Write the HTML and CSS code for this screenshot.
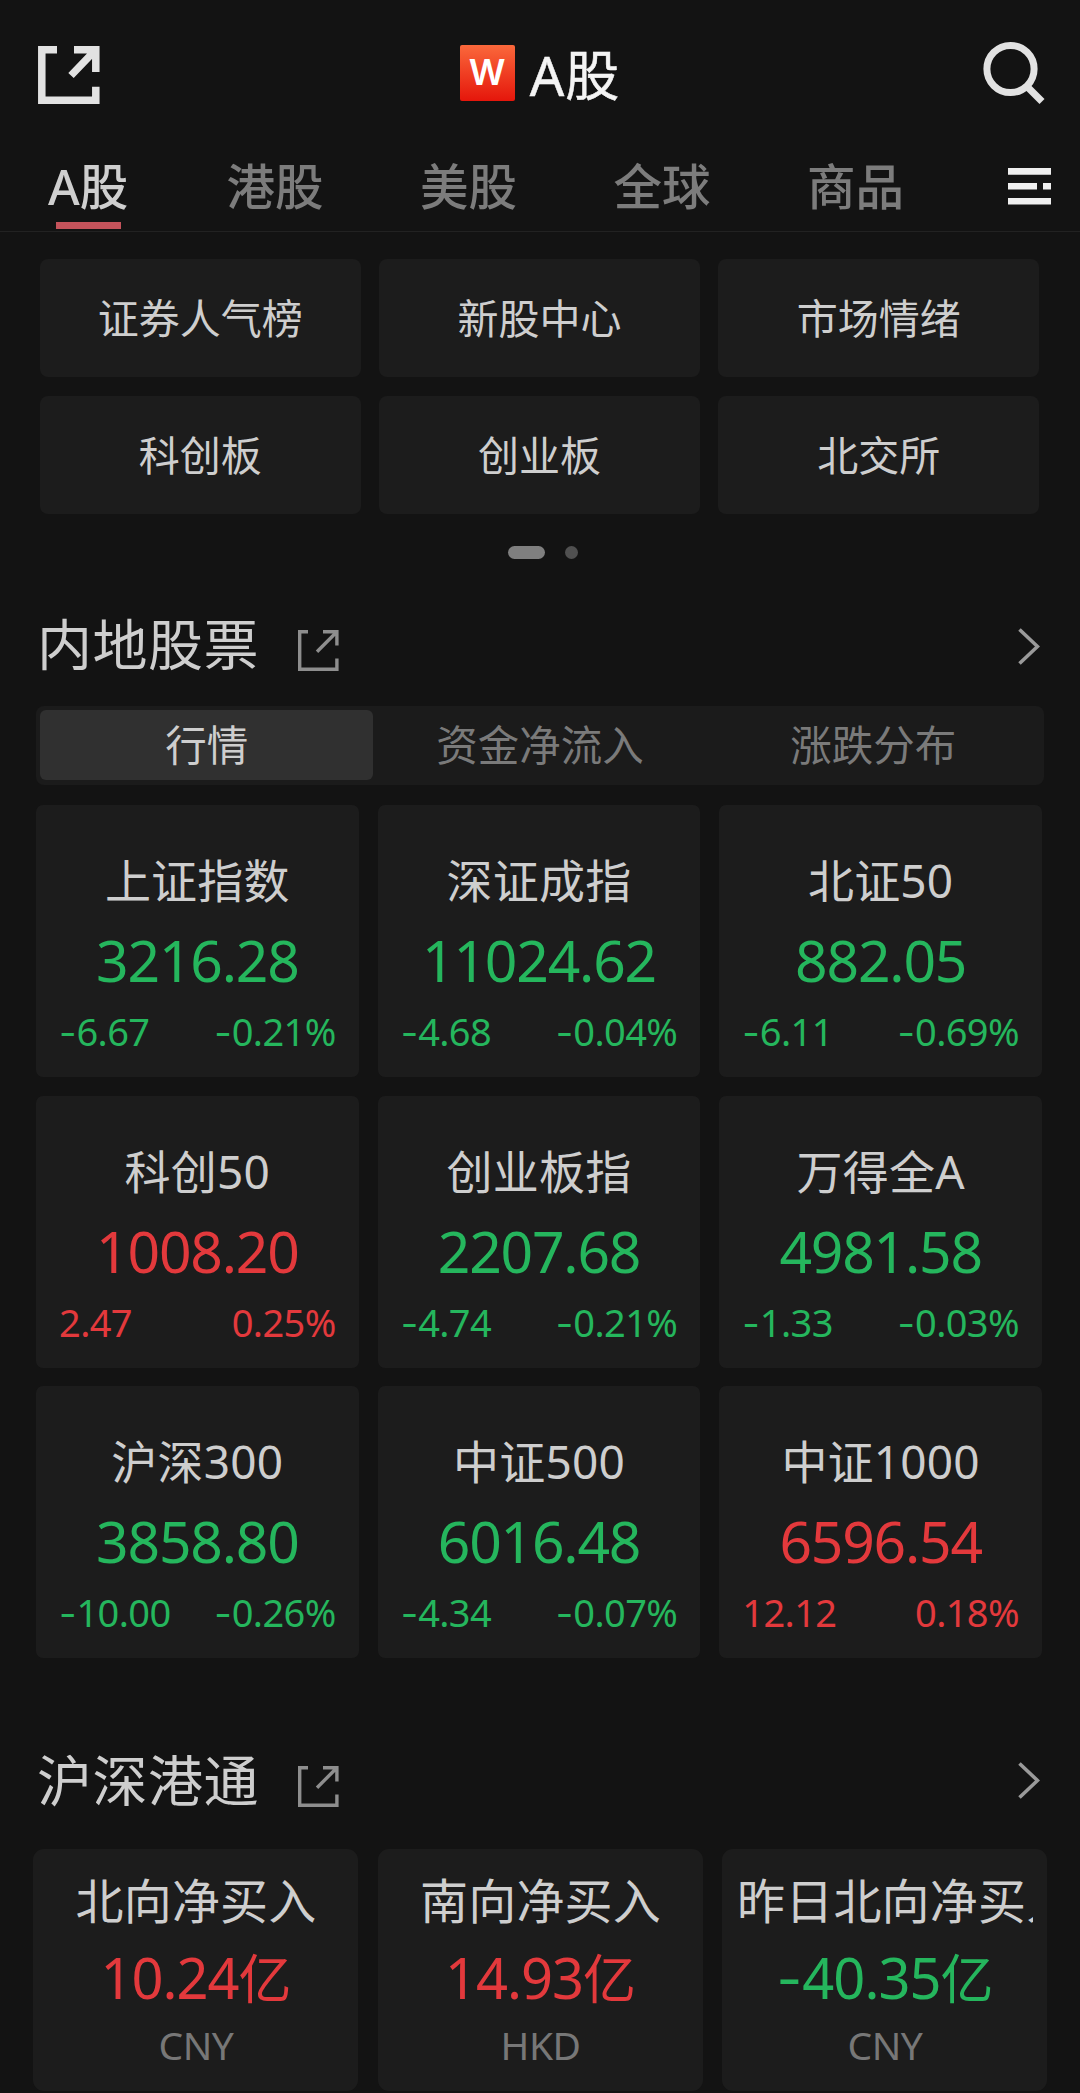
FILE: index.html
```html
<!DOCTYPE html>
<html lang="zh-CN">
<head>
<meta charset="utf-8">
<title>A股</title>
<link rel="stylesheet" href="styles.css">
</head>
<body>
<svg width="0" height="0" class="defs">
  <symbol id="share" viewBox="0 0 41 41">
    <path d="M10 1.7H1.7V39.3H38.9V28.5M25 1.7H38.9V15.5M38.4 2.2L19 21.8"/>
  </symbol>
  <symbol id="chevron" viewBox="0 0 22 37">
    <path d="M1.5 1.5L19.5 18.5L1.5 35.5"/>
  </symbol>
</svg>
<header class="header">
  <svg class="header-share" viewBox="0 0 62 58"><path d="M19 3.8H3.8V54.3H57.8V40.8M36 3.8H57.8V26M56.5 5L33 29.5"/></svg>
  <div class="brand"><span class="logo">W</span><h1 class="title">A股</h1></div>
  <svg class="search" viewBox="0 0 62 64"><circle cx="27.5" cy="28" r="23.6"/><path d="M44.5 46L59 60.5"/></svg>
</header>
<nav class="tabs">
  <span class="tab tab-active">A股</span>
  <span class="tab">港股</span>
  <span class="tab">美股</span>
  <span class="tab">全球</span>
  <span class="tab">商品</span>
  <svg class="menu" viewBox="0 0 43 37"><path d="M0 3.4H43M0 18.3H29M35 18.3H43M0 33.3H43"/></svg>
</nav>
<main>
  <div class="quick">
    <span class="quick-item">证券人气榜</span>
    <span class="quick-item">新股中心</span>
    <span class="quick-item">市场情绪</span>
    <span class="quick-item">科创板</span>
    <span class="quick-item">创业板</span>
    <span class="quick-item">北交所</span>
  </div>
  <div class="pager"><i class="pill"></i><i class="dot"></i></div>

  <section>
    <div class="section-head">
      <h2 class="section-title">内地股票</h2>
      <svg class="share"><use href="#share"/></svg>
      <svg class="chevron"><use href="#chevron"/></svg>
    </div>
    <div class="segments">
      <span class="segment segment-active">行情</span>
      <span class="segment">资金净流入</span>
      <span class="segment">涨跌分布</span>
    </div>
    <div class="indices">
      <article class="index down"><h3 class="name">上证指数</h3><p class="value">3216.28</p><p class="change"><span><b class="sign">-</b>6.67</span><span><b class="sign">-</b>0.21%</span></p></article>
      <article class="index down"><h3 class="name">深证成指</h3><p class="value">11024.62</p><p class="change"><span><b class="sign">-</b>4.68</span><span><b class="sign">-</b>0.04%</span></p></article>
      <article class="index down"><h3 class="name">北证50</h3><p class="value">882.05</p><p class="change"><span><b class="sign">-</b>6.11</span><span><b class="sign">-</b>0.69%</span></p></article>
      <article class="index up"><h3 class="name">科创50</h3><p class="value">1008.20</p><p class="change"><span>2.47</span><span>0.25%</span></p></article>
      <article class="index down"><h3 class="name">创业板指</h3><p class="value">2207.68</p><p class="change"><span><b class="sign">-</b>4.74</span><span><b class="sign">-</b>0.21%</span></p></article>
      <article class="index down"><h3 class="name">万得全A</h3><p class="value">4981.58</p><p class="change"><span><b class="sign">-</b>1.33</span><span><b class="sign">-</b>0.03%</span></p></article>
      <article class="index down"><h3 class="name">沪深300</h3><p class="value">3858.80</p><p class="change"><span><b class="sign">-</b>10.00</span><span><b class="sign">-</b>0.26%</span></p></article>
      <article class="index down"><h3 class="name">中证500</h3><p class="value">6016.48</p><p class="change"><span><b class="sign">-</b>4.34</span><span><b class="sign">-</b>0.07%</span></p></article>
      <article class="index up"><h3 class="name">中证1000</h3><p class="value">6596.54</p><p class="change"><span>12.12</span><span>0.18%</span></p></article>
    </div>
  </section>

  <section class="connect">
    <div class="section-head">
      <h2 class="section-title">沪深港通</h2>
      <svg class="share"><use href="#share"/></svg>
      <svg class="chevron"><use href="#chevron"/></svg>
    </div>
    <div class="flows">
      <article class="flow up"><h3 class="flow-name">北向净买入</h3><p class="flow-value">10.24<span class="unit">亿</span></p><p class="currency">CNY</p></article>
      <article class="flow up"><h3 class="flow-name">南向净买入</h3><p class="flow-value">14.93<span class="unit">亿</span></p><p class="currency">HKD</p></article>
      <article class="flow down"><h3 class="flow-name">昨日北向净买入</h3><p class="flow-value"><b class="sign">-</b>40.35<span class="unit">亿</span></p><p class="currency">CNY</p></article>
    </div>
  </section>
</main>
</body>
</html>
```
FILE: styles.css
```css
* { box-sizing: border-box; margin: 0; padding: 0; }

body {
  width: 1080px;
  height: 2093px;
  overflow: hidden;
  background: #131313;
  color: #cecece;
  font-family: "Noto Sans", "Noto Sans CJK SC", sans-serif;
  font-weight: 400;
}

h1, h2, h3 { font-weight: 400; }
svg { fill: none; stroke: currentColor; flex: none; }
.defs { position: absolute; }

.header {
  height: 146px;
  padding: 0 35px 0 38px;
  display: flex;
  align-items: center;
  justify-content: space-between;
}
.header-share { width: 62px; height: 58px; margin-top: 4px; stroke-width: 7.5; color: #e2e2e2; }
.brand { display: flex; align-items: center; gap: 15px; margin-right: 3px; }
.logo {
  width: 55px;
  height: 56px;
  border-radius: 2px;
  background: linear-gradient(#fa683b, #e5160b);
  color: #fff;
  font: 600 36px/54px Inter, sans-serif;
  text-align: center;
}
.title { font-size: 54px; font-weight: 400; line-height: 60px; letter-spacing: 1px; color: #f4f4f4; margin-top: 4px; -webkit-text-stroke: .5px #f4f4f4; }
.search { width: 62px; height: 64px; stroke-width: 7; color: #e2e2e2; }

.tabs {
  height: 86px;
  padding: 0 29px 0 48px;
  display: flex;
  gap: 96.5px;
  border-bottom: 1px solid #222;
}
.tab { position: relative; font-size: 48.5px; font-weight: 500; line-height: 80px; color: #7c7c7c; white-space: nowrap; }
.tab-active { color: #cfcfcf; width: 82px; }
.tab-active::after {
  content: "";
  position: absolute;
  left: 8px;
  top: 76px;
  width: 65px;
  height: 7px;
  background: #c5535b;
}
.menu { width: 43px; height: 37px; margin: 22px 0 0 auto; stroke-width: 6.6; color: #efefef; }

.quick {
  padding: 27px 41px 0 40px;
  display: grid;
  grid-template-columns: repeat(3, 1fr);
  grid-auto-rows: 118px;
  gap: 19px 18.5px;
}
.quick-item { background: #1c1c1c; border-radius: 8px; font-size: 41px; line-height: 119px; text-align: center; }

.pager { height: 77px; padding-left: 6px; display: flex; align-items: center; justify-content: center; gap: 20px; }
.pill { width: 37px; height: 13px; border-radius: 7px; background: #7f7f7f; }
.dot { width: 13px; height: 13px; border-radius: 50%; background: #505050; }

.section-head { height: 115px; padding: 0 40px 9px 37px; display: flex; align-items: center; }
.section-title { font-size: 55px; line-height: 80px; letter-spacing: .5px; }
.share { width: 41px; height: 41px; margin: 12px 0 0 39px; stroke-width: 3.4; color: #8e8e8e; }
.chevron { width: 22px; height: 37px; margin: 4px 0 0 auto; stroke-width: 3.6; color: #9a9a9a; }

.segments {
  height: 79px;
  margin: 0 36px;
  padding: 4px 4px 5px;
  display: grid;
  grid-template-columns: repeat(3, 1fr);
  background: #1b1b1b;
  border-radius: 8px;
}
.segment { font-size: 41.5px; line-height: 70px; text-align: center; color: #7a7a7a; }
.segment-active { background: #303030; border-radius: 6px; color: #cecece; }

.indices {
  padding: 20px 38px 0 36px;
  display: grid;
  grid-template-columns: repeat(3, 1fr);
  grid-auto-rows: 272px;
  gap: 18.5px 19px;
}
.index { background: #1c1c1c; border-radius: 7px; padding: 40px 23px 0; }
.name { font-size: 46px; line-height: 70px; letter-spacing: .2px; text-align: center; white-space: nowrap; }
.value { margin-top: 8px; font-size: 57px; line-height: 74px; letter-spacing: -1.2px; text-align: center; }
.change { margin-top: 4px; display: flex; justify-content: space-between; font-size: 38px; line-height: 60px; letter-spacing: -.6px; }
.down .value, .down .change, .down .flow-value { color: #25b65d; }
.up .value, .up .change, .up .flow-value { color: #e3393c; }
.sign { font-family: Inter, sans-serif; font-weight: 400; letter-spacing: 0; }

.connect { padding-top: 63px; }
.connect .section-head { height: 128px; padding-bottom: 10px; }
.connect .chevron { margin-top: 0; }
.flows {
  padding: 0 33px;
  display: grid;
  grid-template-columns: repeat(3, 1fr);
  grid-auto-rows: 242px;
  gap: 19.5px;
}
.flow { min-width: 0; background: #1c1c1c; border-radius: 11px; padding: 17px 14px 0 15px; text-align: center; }
.flow-name { font-size: 48px; line-height: 70px; letter-spacing: .2px; white-space: nowrap; overflow: hidden; }
.flow-value { margin-top: 4px; height: 74px; font-size: 56px; line-height: 74px; letter-spacing: -1px; }
.unit { font-size: 53px; letter-spacing: 0; }
.currency { margin-top: 1px; font-size: 39px; line-height: 60px; letter-spacing: -.5px; color: #777; }
```
